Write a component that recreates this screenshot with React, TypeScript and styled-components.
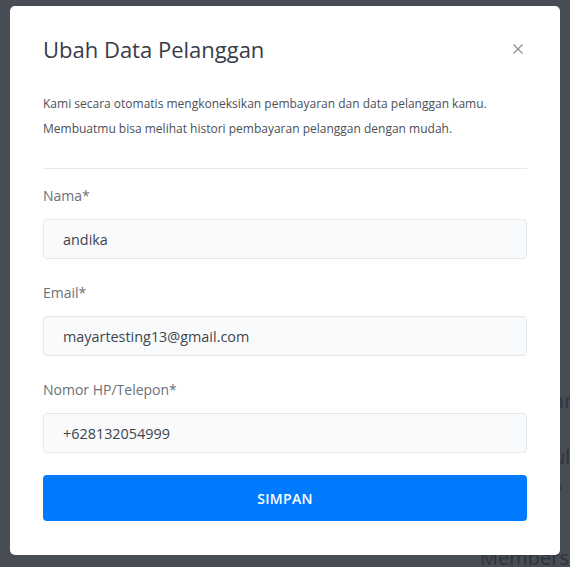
import React from "react";
import styled, { createGlobalStyle } from "styled-components";

const Global = createGlobalStyle`
  html, body { margin: 0; padding: 0; }
  body { background: #474c55; font-family: "Open Sans", "Noto Sans", sans-serif; }
  * { box-sizing: border-box; }
`;

const Page = styled.div`
  position: relative;
  width: 570px;
  height: 567px;
  overflow: hidden;
  background: #474c55;
`;

const Behind = styled.div`
  display: flex;
  flex-direction: column;
  padding-top: 388px;
  color: #30343a;
`;

const BehindLine = styled.div<{ $indent: number; $size: number; $gap: number }>`
  margin-left: ${(p) => p.$indent}px;
  margin-top: ${(p) => p.$gap}px;
  font-size: ${(p) => p.$size}px;
  line-height: 1.3;
  white-space: nowrap;
`;

const Overlay = styled.div`
  position: absolute;
  inset: 0;
  padding: 6px 0 0 10px;
`;

const Modal = styled.div`
  width: 550px;
  background: #ffffff;
  border-radius: 5px;
  padding: 29px 33px 34px;
  display: flex;
  flex-direction: column;
`;

const Header = styled.div`
  display: flex;
  align-items: center;
  justify-content: space-between;
`;

const Title = styled.h2`
  margin: 0;
  font-size: 22px;
  line-height: 28px;
  font-weight: 400;
  color: #373c47;
`;

const Close = styled.button`
  border: none;
  background: none;
  padding: 0;
  margin-right: 4px;
  width: 10px;
  height: 10px;
  display: flex;
  cursor: pointer;
`;

const Desc = styled.p`
  margin: 28px 0 0;
  font-size: 12px;
  line-height: 25px;
  color: #4a4f57;
`;

const Divider = styled.hr`
  margin: 27px 0 0;
  border: none;
  border-top: 1px solid #e6e8eb;
`;

const Form = styled.form`
  display: flex;
  flex-direction: column;
  gap: 23px;
  margin-top: 16px;
`;

const Field = styled.div`
  display: flex;
  flex-direction: column;
  gap: 13px;
`;

const Label = styled.label`
  font-size: 14px;
  line-height: 21px;
  color: #6b7079;
`;

const Input = styled.input`
  height: 40px;
  width: 100%;
  border: 1px solid #e4e8ec;
  border-radius: 4px;
  background: #f9fafb;
  padding: 0 19px;
  font-family: inherit;
  font-size: 14.4px;
  color: #3f444d;
  outline: none;
`;

const Submit = styled.button`
  margin-top: -1px;
  height: 46px;
  border: none;
  border-radius: 4px;
  background: #007bff;
  color: #ffffff;
  font-family: inherit;
  font-size: 14px;
  font-weight: 600;
  letter-spacing: 0.3px;
  cursor: pointer;
`;

const fields = [
  { label: "Nama*", value: "andika" },
  { label: "Email*", value: "mayartesting13@gmail.com" },
  { label: "Nomor HP/Telepon*", value: "+628132054999" },
];

export default function App() {
  return (
    <>
      <Global />
      <Page>
        <Behind>
          <BehindLine $indent={536} $size={20} $gap={0}>Plan</BehindLine>
          <BehindLine $indent={540} $size={20} $gap={30}>Bul</BehindLine>
          <BehindLine $indent={540} $size={13} $gap={8}>Oto</BehindLine>
          <BehindLine $indent={480} $size={20} $gap={50}>Membership</BehindLine>
        </Behind>
        <Overlay>
          <Modal>
            <Header>
              <Title>Ubah Data Pelanggan</Title>
              <Close type="button" aria-label="Tutup">
                <svg width="10" height="10" viewBox="0 0 10 10">
                  <path d="M0.5 0.5 L9.5 9.5 M9.5 0.5 L0.5 9.5" stroke="#8c8f94" strokeWidth="1.2" fill="none" />
                </svg>
              </Close>
            </Header>
            <Desc>
              Kami secara otomatis mengkoneksikan pembayaran dan data pelanggan kamu.
              <br />
              Membuatmu bisa melihat histori pembayaran pelanggan dengan mudah.
            </Desc>
            <Divider />
            <Form onSubmit={(e) => e.preventDefault()}>
              {fields.map((f) => (
                <Field key={f.label}>
                  <Label>{f.label}</Label>
                  <Input defaultValue={f.value} />
                </Field>
              ))}
              <Submit type="submit">SIMPAN</Submit>
            </Form>
          </Modal>
        </Overlay>
      </Page>
    </>
  );
}
